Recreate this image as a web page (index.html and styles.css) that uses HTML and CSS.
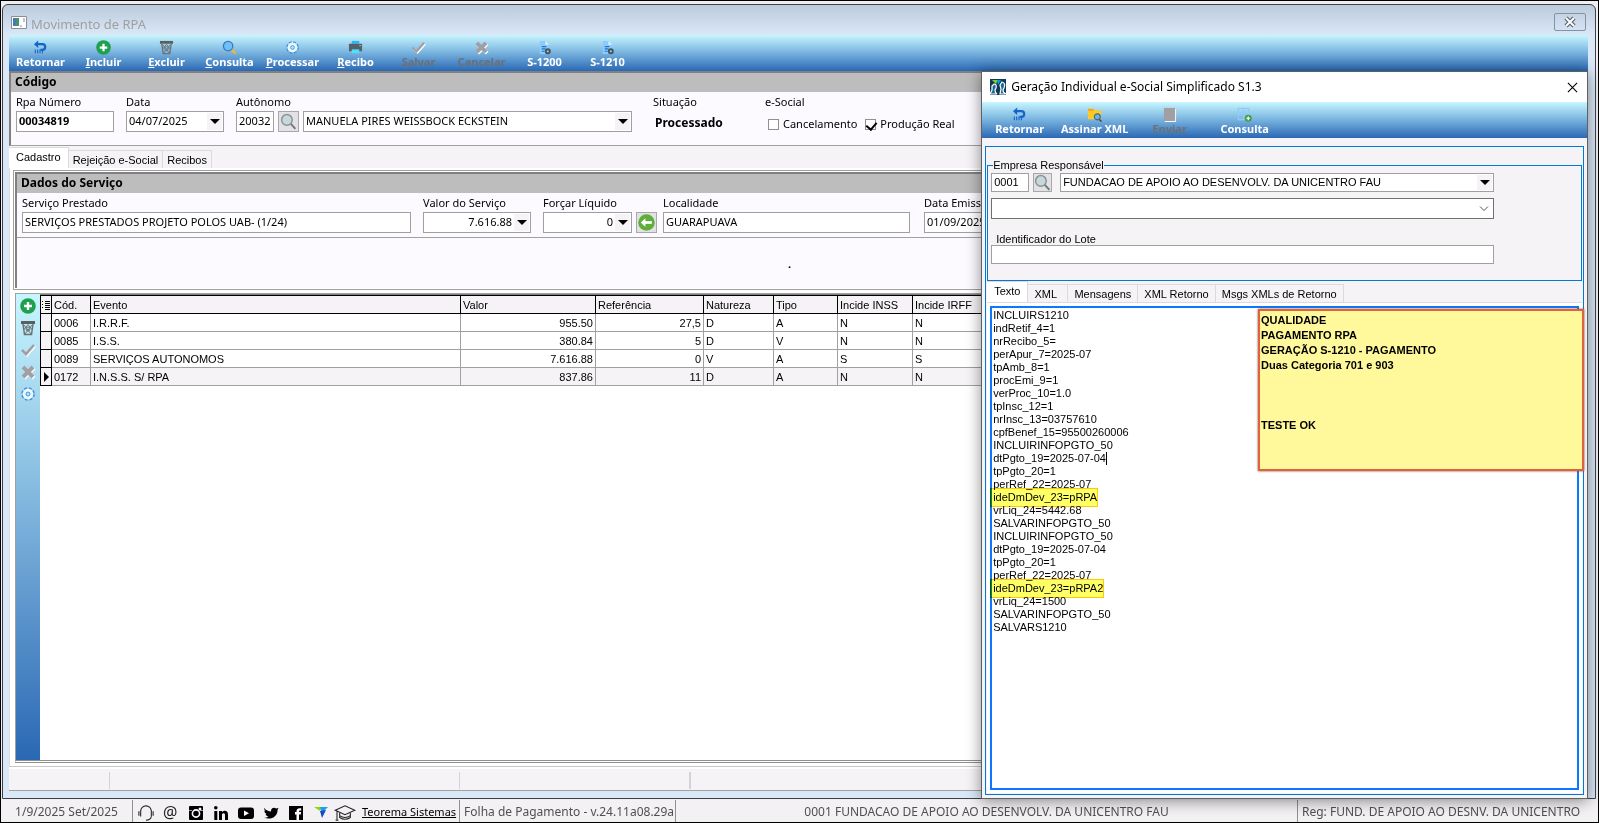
FILE: index.html
```
<!DOCTYPE html>
<html lang="pt-BR">
<head>
  <meta charset="UTF-8">
  <title>Movimento de RPA</title>
  <link rel="stylesheet" href="styles.css">
</head>
<body>

  <svg class="defs" aria-hidden="true">
    <symbol id="i-back" viewBox="0 0 16 16">
      <path d="M4 4.500H10a3 3 0 0 1 0 6H8" fill="none" stroke="#1565c8" stroke-width="2.400"/>
      <path d="M1 4.500L5.500 0.500V8.500Z" fill="#1565c8"/>
      <path d="M2.500 10v4M5 10v4M7.500 10v4M10 11v3" stroke="#1565c8" stroke-width="1.200"/>
    </symbol>
    <symbol id="i-add" viewBox="0 0 16 16">
      <circle cx="8" cy="8" r="7.800" fill="#1fa04c"/>
      <path d="M8 4v8M4 8h8" stroke="#fff" stroke-width="2.400"/>
    </symbol>
    <symbol id="i-trash" viewBox="0 0 16 16">
      <path d="M1 1h14v3H1z" fill="#5a6060"/>
      <path d="M3 4L4.500 14.500H11.500L13 4" fill="none" stroke="#6c7474" stroke-width="1.500"/>
      <path d="M4 5l7 9M8 4.500l4 5M12 5l-7 9M8 4.500l-4 5" stroke="#6c7474" stroke-width="1"/>
      <circle cx="8" cy="9" r="2" fill="none" stroke="#6c7474"/>
    </symbol>
    <symbol id="i-lens" viewBox="0 0 16 16">
      <path d="M10 10L14.500 14.500" stroke="#f2b633" stroke-width="2.400"/>
      <circle cx="6.500" cy="6.500" r="5" fill="#6fc0fa" stroke="#3d79b8" stroke-width="1.400"/>
    </symbol>
    <symbol id="i-lens-gray" viewBox="0 0 16 16">
      <path d="M10 10L14.500 15" stroke="#707878" stroke-width="1.800"/>
      <circle cx="6.500" cy="6.500" r="5" fill="#c6d8dc" stroke="#8a9494" stroke-width="1.400"/>
    </symbol>
    <symbol id="i-gear" viewBox="0 0 16 16">
      <circle cx="8" cy="8" r="5" fill="none" stroke="#3d92dc" stroke-width="3.600" stroke-dasharray="2.500 1.430"/>
      <circle cx="8" cy="8" r="4.200" fill="#fff" stroke="#e8f6ff" stroke-width="2.400"/>
      <circle cx="8" cy="8" r="2" fill="#b4e4fa" stroke="#3d92dc" stroke-width="1"/>
    </symbol>
    <symbol id="i-print" viewBox="0 0 16 16">
      <path d="M4 1h8v3H4z" fill="#29b6f6"/>
      <path d="M1 4h14v8H1z" fill="#56606a"/>
      <path d="M4 10h8v4H4z" fill="#4fe0fa"/>
      <path d="M12 6h2" stroke="#6ce08a"/>
    </symbol>
    <symbol id="i-check" viewBox="0 0 16 16">
      <path d="M3 9l4 4 8-9" fill="none" stroke="#fff" stroke-width="2.600"/>
      <path d="M2 8l4 4 8-9" fill="none" stroke="#a0a0a4" stroke-width="2.600"/>
    </symbol>
    <symbol id="i-cross" viewBox="0 0 16 16">
      <path d="M4 4l10 10M14 4L4 14" stroke="#fff" stroke-width="4"/>
      <path d="M3 3l10 10M13 3L3 13" stroke="#a0a0a4" stroke-width="4"/>
    </symbol>
    <symbol id="i-doc" viewBox="0 0 16 16">
      <path d="M3 1h6l4 4v10H3z" fill="#90caf9"/>
      <path d="M9 1l4 4H9z" fill="#e1f5fe"/>
      <path d="M5 7h5M5 9.500h4M5 12h3" stroke="#1976d2" stroke-width="1.300"/>
      <circle cx="11.500" cy="12" r="2.200" fill="none" stroke="#42535c" stroke-width="2"/>
    </symbol>
    <symbol id="i-folder" viewBox="0 0 16 16">
      <path d="M1 2h6l1.500 1.500H15V13H1z" fill="#ffca28"/>
      <path d="M1 2h6v2H1z" fill="#ffa000"/>
      <path d="M13 13l2.500 2.500" stroke="#37474f" stroke-width="1.600"/>
      <circle cx="11" cy="10.500" r="3.200" fill="#64b5f6" stroke="#54646c" stroke-width="1.200"/>
    </symbol>
    <symbol id="i-box" viewBox="0 0 16 16">
      <path d="M3 2h12v14H3z" fill="#fff"/>
      <path d="M2 1h12v14H2z" fill="#a0a0a4"/>
    </symbol>
    <symbol id="i-grid" viewBox="0 0 16 16">
      <path d="M1.500 1.500h11v12h-11zM7 1.500v12M1.500 7h11" fill="none" stroke="#8fcbfa" stroke-width="1.400"/>
      <circle cx="12" cy="12" r="3.800" fill="#43a047"/>
      <path d="M12 10v4M10 12h4" stroke="#fff" stroke-width="1.300"/>
    </symbol>
  </svg>

  <main class="window">
    <header class="titlebar">
      <svg class="app-icon" viewBox="0 0 16 13"><path d="M.5.5h15v12H.5z" fill="#fff" stroke="#8a8f96"/><path d="M2 2h6v8H2z" fill="#4a9070"/><path d="M2 2h3v8H2z" fill="#477da8"/><path d="M13 2v4M9 10h2" stroke="#889"/></svg>
      <h1>Movimento de RPA</h1>
      <button class="close" aria-label="Fechar">
        <svg viewBox="0 0 14 12"><path d="M3 2l8 8M11 2l-8 8" stroke="#5c6370" stroke-width="4.400"/><path d="M3 2l8 8M11 2l-8 8" stroke="#fff" stroke-width="2"/></svg>
      </button>
    </header>

    <nav class="toolbar">
      <button><svg><use href="#i-back"/></svg><span>Retornar</span></button>
      <button><svg><use href="#i-add"/></svg><span><u>I</u>ncluir</span></button>
      <button><svg><use href="#i-trash"/></svg><span><u>E</u>xcluir</span></button>
      <button><svg><use href="#i-lens"/></svg><span><u>C</u>onsulta</span></button>
      <button><svg><use href="#i-gear"/></svg><span><u>P</u>rocessar</span></button>
      <button><svg><use href="#i-print"/></svg><span><u>R</u>ecibo</span></button>
      <button disabled><svg><use href="#i-check"/></svg><span><u>S</u>alvar</span></button>
      <button disabled><svg><use href="#i-cross"/></svg><span>Cancelar</span></button>
      <button><svg><use href="#i-doc"/></svg><span>S-1200</span></button>
      <button><svg><use href="#i-doc"/></svg><span>S-1210</span></button>
    </nav>

    <section class="panel code-panel">
      <h2>Código</h2>
      <div class="fields">
        <div class="field w-code">
          <label for="rpa">Rpa Número</label>
          <input id="rpa" class="box strong" value="00034819">
        </div>
        <div class="field w-code">
          <label for="data">Data</label>
          <div class="box combo"><input id="data" value="04/07/2025"><button aria-label="Abrir calendário"></button></div>
        </div>
        <div class="field">
          <label for="aut">Autônomo</label>
          <div class="group">
            <input id="aut" class="box w-aut" value="20032">
            <button class="find" aria-label="Pesquisar autônomo"><svg><use href="#i-lens-gray"/></svg></button>
            <div class="box combo w-name"><select aria-label="Nome do autônomo"><option>MANUELA PIRES WEISSBOCK ECKSTEIN</option></select><i></i></div>
          </div>
        </div>
        <div class="field w-status">
          <span>Situação</span>
          <strong>Processado</strong>
        </div>
        <div class="field">
          <span>e-Social</span>
          <div class="checks">
            <label><input type="checkbox">Cancelamento</label>
            <label><input type="checkbox" checked>Produção Real</label>
          </div>
        </div>
      </div>
    </section>

    <div class="tabs main-tabs">
      <button class="active">Cadastro</button>
      <button>Rejeição e-Social</button>
      <button>Recibos</button>
    </div>

    <div class="page">
      <div class="frame">
        <section class="panel">
          <h2>Dados do Serviço</h2>
          <div class="fields service">
            <div class="field w-service">
              <label for="serv">Serviço Prestado</label>
              <input id="serv" class="box" value="SERVIÇOS PRESTADOS PROJETO POLOS UAB- (1/24)">
            </div>
            <div class="field w-value">
              <label for="valor">Valor do Serviço</label>
              <div class="box combo num"><input id="valor" value="7.616.88"><button aria-label="Calculadora"></button></div>
            </div>
            <div class="field">
              <label for="liq">Forçar Líquido</label>
              <div class="group">
                <div class="box combo num w-liq"><input id="liq" value="0"><button aria-label="Calculadora"></button></div>
                <button class="find" aria-label="Aplicar líquido"><svg viewBox="0 0 16 16"><circle cx="8" cy="8" r="7.800" fill="#5fae3c"/><path d="M5 8h8" stroke="#fff" stroke-width="2.600"/><path d="M2.500 8L7 4v8z" fill="#fff"/></svg></button>
              </div>
            </div>
            <div class="field w-local">
              <label for="loc">Localidade</label>
              <input id="loc" class="box" value="GUARAPUAVA">
            </div>
            <div class="field w-code">
              <label for="emis">Data Emissão</label>
              <input id="emis" class="box" value="01/09/2025">
            </div>
          </div>
          <div class="blank"><b>·</b></div>
        </section>
      </div>

      <div class="grid">
        <div class="sidebar">
          <button aria-label="Incluir evento"><svg><use href="#i-add"/></svg></button>
          <button aria-label="Excluir evento"><svg><use href="#i-trash"/></svg></button>
          <button aria-label="Salvar evento" disabled><svg><use href="#i-check"/></svg></button>
          <button aria-label="Cancelar evento" disabled><svg><use href="#i-cross"/></svg></button>
          <button aria-label="Processar evento"><svg><use href="#i-gear"/></svg></button>
        </div>
        <div class="grid-body">
          <table>
            <colgroup>
              <col class="c-mark"><col class="c-cod"><col class="c-evento"><col class="c-valor"><col class="c-ref"><col class="c-nat"><col class="c-tipo"><col class="c-inss"><col class="c-irff"><col>
            </colgroup>
            <thead>
              <tr><th><svg class="mark" viewBox="0 0 8 10"><path d="M0 1.500h1M0 4.500h1M0 7.500h1M3 1.500h5M3 3.500h5M3 5.500h5M3 7.500h5M3 9.500h5" stroke="#000"/></svg></th><th>Cód.</th><th>Evento</th><th>Valor</th><th>Referência</th><th>Natureza</th><th>Tipo</th><th>Incide INSS</th><th>Incide IRFF</th><th></th></tr>
            </thead>
            <tbody>
              <tr><th></th><td>0006</td><td>I.R.R.F.</td><td class="r">955.50</td><td class="r">27,5</td><td>D</td><td>A</td><td>N</td><td>N</td><td></td></tr>
              <tr><th></th><td>0085</td><td>I.S.S.</td><td class="r">380.84</td><td class="r">5</td><td>D</td><td>V</td><td>N</td><td>N</td><td></td></tr>
              <tr><th></th><td>0089</td><td>SERVIÇOS AUTONOMOS</td><td class="r">7.616.88</td><td class="r">0</td><td>V</td><td>A</td><td>S</td><td>S</td><td></td></tr>
              <tr class="current"><th><svg class="mark" viewBox="0 0 8 10"><path d="M2 0l5 5-5 5z"/></svg></th><td>0172</td><td>I.N.S.S. S/ RPA</td><td class="r">837.86</td><td class="r">11</td><td>D</td><td>A</td><td>N</td><td>N</td><td></td></tr>
            </tbody>
          </table>
        </div>
      </div>
    </div>

    <div class="status">
      <span class="s1"></span><span class="s2"></span><span class="s3"></span><span></span>
    </div>
  </main>

  <footer class="taskbar">
    <span class="t-date">1/9/2025 Set/2025</span>
    <span class="t-links">
      <a href="#" aria-label="Suporte"><svg viewBox="0 0 18 18"><path d="M3 9V7a6 6 0 0 1 12 0v2M3 6v7M15 6v7M1 7v5M17 7v5M15 13q-1 4-6 4" fill="none" stroke="#222" stroke-width="1.200"/></svg></a>
      <a href="#" class="at">@</a>
      <a href="#" aria-label="Instagram"><svg viewBox="0 0 16 16"><rect x="1" y="1" width="14" height="14" rx="1"/><circle cx="8" cy="8.500" r="3.600" fill="none" stroke="#fff" stroke-width="1.600"/><path d="M11 3h2v2h-2zM1 5.500h3M12 5.500h3" fill="#fff" stroke="#fff" stroke-width=".6"/></svg></a>
      <a href="#" aria-label="LinkedIn"><svg viewBox="0 0 16 16"><circle cx="2.800" cy="2.800" r="1.800"/><path d="M1.300 6h3v9h-3zM6 6h3v1.300C10.500 5 15 5.200 15 9.500V15h-3v-5c0-2.600-3-2.200-3 0v5H6z"/></svg></a>
      <a href="#" aria-label="YouTube"><svg viewBox="0 0 16 16"><rect x="0" y="2.500" width="16" height="11.500" rx="3"/><path d="M6 5.500l5 2.700-5 2.700z" fill="#fff"/></svg></a>
      <a href="#" aria-label="Twitter"><svg viewBox="0 0 16 16"><path d="M1 3c2 2.400 4.500 3.300 7 3.400C7.600 3.500 11 1.400 13 3.600L15.500 3l-1 2c.5 6-6 10.500-13.500 7.800 2 0 3.400-.5 4.500-1.300C4 11.300 3 10.300 2.600 9h1.300C2.300 8.300 1.300 7 1.400 5.400l1.200.4C1.200 4.600.9 4 1 3z"/></svg></a>
      <a href="#" aria-label="Facebook"><svg viewBox="0 0 16 16"><rect x="1" y="1" width="14" height="14"/><path d="M8.500 15V9.500H7V7h1.500C8.300 4 9.500 2.800 13.200 3.200v2.300c-2-.2-2.200.2-2.100 1.500h2l-.3 2.500H11V15z" fill="#fff"/></svg></a>
      <a href="#" aria-label="Teorema"><svg viewBox="0 0 16 16"><path d="M1 2h8L7 6z" fill="#8bd80c"/><path d="M7 2h8L9 8z" fill="#12a2f0"/><path d="M7 6l6-1-4 8z" fill="#1648c8"/></svg></a>
      <a href="#" aria-label="Treinamento" class="cap"><svg viewBox="0 0 24 18"><path d="M1 6L12 1l11 5-11 5zM6 9v5q6 4 12 0V9M6 12q6 4 12 0M3 7v9M1.500 17h3" fill="none" stroke="#222" stroke-width="1.200"/></svg></a>
    </span>
    <a class="t-site" href="#">Teorema Sistemas</a>
    <span class="t-app">Folha de Pagamento - v.24.11a08.29a</span>
    <span class="t-company">0001 FUNDACAO DE APOIO AO DESENVOLV. DA UNICENTRO FAU</span>
    <span class="t-reg">Reg: FUND. DE APOIO AO DESNV. DA UNICENTRO</span>
  </footer>

  <div class="dialog" role="dialog" aria-labelledby="dlgTitle">
    <header class="dialog-title">
      <svg class="dlg-icon" viewBox="0 0 16 16"><path d="M0 0h16v16H0z" fill="#103a54"/><path d="M2 1h6l-2 4z" fill="#7ed321"/><path d="M7 1h4L8 6z" fill="#00a0e8"/><path d="M4 5q3 0 2 4l-1 2q0 3 2 4H0l2-4V7zM12 3q4 1 2 6l-1 2q0 3 3 4h-6l1-5-1-4z" fill="#1f6a9a" stroke="#fff" stroke-width="1.200"/></svg>
      <h2 id="dlgTitle">Geração Individual e-Social Simplificado S1.3</h2>
      <button aria-label="Fechar"><svg viewBox="0 0 12 12"><path d="M1 1l10 10M11 1L1 11" stroke="#000" stroke-width="1.200"/></svg></button>
    </header>
    <nav class="toolbar wide">
      <button><svg><use href="#i-back"/></svg><span>Retornar</span></button>
      <button><svg><use href="#i-folder"/></svg><span>Assinar XML</span></button>
      <button disabled><svg><use href="#i-box"/></svg><span>Enviar</span></button>
      <button><svg><use href="#i-grid"/></svg><span>Consulta</span></button>
    </nav>

    <div class="dialog-body">
      <fieldset>
        <legend>Empresa Responsável</legend>
        <div class="group company">
          <input class="box w-emp" aria-label="Código da empresa" value="0001">
          <button class="find" aria-label="Pesquisar empresa"><svg><use href="#i-lens-gray"/></svg></button>
          <div class="box combo grow"><select aria-label="Empresa"><option>FUNDACAO DE APOIO AO DESENVOLV. DA UNICENTRO FAU</option></select><i></i></div>
        </div>
        <div class="box combo cert"><select aria-label="Certificado"><option></option></select><svg viewBox="0 0 10 6"><path d="M1 1l4 4 4-4" fill="none" stroke="#555"/></svg></div>
        <label for="lote">Identificador do Lote</label>
        <input id="lote" class="box lote">
      </fieldset>

      <div class="tabs">
        <button class="active">Texto</button>
        <button class="t-xml">XML</button>
        <button>Mensagens</button>
        <button>XML Retorno</button>
        <button>Msgs XMLs de Retorno</button>
      </div>
      <div class="text-page">
        <textarea aria-label="Texto" spellcheck="false">INCLUIRS1210
indRetif_4=1
nrRecibo_5=
perApur_7=2025-07
tpAmb_8=1
procEmi_9=1
verProc_10=1.0
tpInsc_12=1
nrInsc_13=03757610
cpfBenef_15=95500260006
INCLUIRINFOPGTO_50
dtPgto_19=2025-07-04
tpPgto_20=1
perRef_22=2025-07
ideDmDev_23=pRPA
vrLiq_24=5442.68
SALVARINFOPGTO_50
INCLUIRINFOPGTO_50
dtPgto_19=2025-07-04
tpPgto_20=1
perRef_22=2025-07
ideDmDev_23=pRPA2
vrLiq_24=1500
SALVARINFOPGTO_50
SALVARS1210</textarea>
        <span class="caret"></span>
        <span class="marker first"></span>
        <span class="marker second"></span>
        <aside class="note">
          <p>QUALIDADE<br>PAGAMENTO RPA<br>GERAÇÃO S-1210 - PAGAMENTO<br>Duas Categoria 701 e 903</p>
          <p>TESTE OK</p>
        </aside>
      </div>
    </div>
  </div>

</body>
</html>
```
FILE: styles.css
```
* {
  box-sizing: border-box;
}
body {
  margin: 0;
  height: 100vh;
  display: flex;
  flex-direction: column;
  position: relative;
  overflow: hidden;
  border: 1px solid #000;
  background: #f0eef0;
  font-family: "Noto Sans", "Open Sans", sans-serif;
  font-size: 11px;
  line-height: 16px;
  color: #000;
}
h1, h2, p {
  margin: 0;
}
h1 {
  font-weight: normal;
}
button, input, select, textarea {
  font: inherit;
  color: inherit;
  margin: 0;
}
button {
  padding: 0;
  border: 0;
  background: none;
}
.defs {
  display: none;
}

/* main window */
.window {
  flex: 1;
  min-height: 0;
  display: flex;
  flex-direction: column;
  margin: 3px 2px 0 1px;
  padding: 0 7px 7px 6px;
  border: 1px solid #404048;
  border-radius: 6px 6px 0 0;
  background: linear-gradient(#bccbdc, #d9e7f7 30px);
}
.titlebar {
  flex: none;
  height: 30px;
  display: flex;
  align-items: center;
  gap: 4px;
  padding: 4px 2px 0;
}
.titlebar h1 {
  flex: 1;
  font-size: 13px;
  padding-top: 3px;
  color: #a0a0a0;
}
.app-icon {
  width: 16px;
  height: 13px;
}
.close {
  width: 32px;
  height: 18px;
  border: 1px solid #8591a8;
  border-radius: 2px;
}
.close svg {
  width: 14px;
  height: 12px;
  display: block;
  margin: auto;
}

/* toolbars */
.toolbar {
  flex: none;
  height: 36px;
  display: flex;
  background: linear-gradient(#c8f6ff, #7fb9e2 45%, #2a68b4);
}
.toolbar button {
  width: 63px;
  display: flex;
  flex-direction: column;
  align-items: center;
  padding-top: 5px;
  color: #fff;
  font-weight: bold;
  line-height: 14px;
  white-space: nowrap;
}
.toolbar.wide button {
  width: 75px;
}
.toolbar button:disabled {
  color: #6c7076;
}
.toolbar svg {
  width: 15px;
  height: 15px;
}

/* panels and fields */
.panel {
  background: #fdfaff;
  border-top: 2px solid #808080;
  border-left: 2px solid #808080;
}
.panel h2 {
  height: 19px;
  padding-left: 4px;
  background: #bdbdbd;
  font-size: 12px;
  line-height: 18px;
}
.code-panel {
  flex: none;
  height: 75px;
  border-bottom: 1px solid #a0a0a0;
}
.fields {
  display: flex;
  gap: 12px;
  padding: 2px 6px 0 5px;
}
.field {
  flex: none;
  display: flex;
  flex-direction: column;
  gap: 1px;
}
.box {
  width: 100%;
  height: 21px;
  padding: 0 2px 2px;
  border: 1px solid #a0a0a0;
  border-radius: 0;
  background: #fff;
}
.strong {
  font-weight: bold;
}
.group {
  display: flex;
  gap: 4px;
}
.combo {
  display: flex;
  padding: 0 1px 0 0;
}
.combo input, .combo select {
  flex: 1;
  width: 20px;
  padding: 0 2px 2px;
  border: 0;
  outline: 0;
  background: none;
  appearance: none;
}
.combo button, .combo i {
  width: 15px;
  display: flex;
  align-items: center;
  justify-content: center;
  margin: 1px 0;
  background: #f6f3f7;
}
.combo button::after, .combo i::after {
  content: "";
  border: 5px solid transparent;
  border-top-color: #000;
  border-bottom: 0;
}
.num input {
  text-align: right;
}
.find {
  width: 21px;
  height: 21px;
  border: 1px solid #a8a8a8;
  background: #e2e2e4;
}
.find svg {
  width: 17px;
  height: 17px;
  display: block;
  margin: auto;
}
.w-code {
  width: 98px;
}
.w-aut {
  width: 38px;
}
.w-name {
  width: 329px;
}
.w-status {
  width: 100px;
  margin-left: 9px;
}
.w-status strong {
  font-size: 12px;
  padding: 4px 2px;
}
.w-service {
  width: 389px;
}
.w-value {
  width: 108px;
}
.w-liq {
  width: 89px;
}
.w-local {
  width: 247px;
  margin: 0 2px 0 -6px;
}
.checks {
  display: flex;
  gap: 8px;
  padding: 5px 3px;
}
.checks label {
  display: flex;
  align-items: center;
  gap: 4px;
}
.checks input {
  appearance: none;
  width: 11px;
  height: 11px;
  border: 1px solid #909090;
  background: #fff;
}
.checks input:checked::after {
  content: "";
  display: block;
  width: 5px;
  height: 8px;
  margin: 0 2px;
  border: solid #000;
  border-width: 0 2px 2px 0;
  transform: rotate(40deg);
}

/* tabs */
.tabs {
  flex: none;
  height: 21px;
  display: flex;
  align-items: flex-end;
  font-family: "Liberation Sans", Arial, sans-serif;
}
.tabs button {
  height: 18px;
  padding: 0 6px;
  border: 1px solid #dcdadd;
  border-left: 0;
  border-bottom: 0;
  background: #f6f3f7;
}
.tabs .active {
  height: 21px;
  padding: 0 7px 2px;
  background: #fff;
}
.main-tabs {
  height: 22px;
  background: #f6f3f7;
}
.main-tabs button {
  padding: 0 4px;
}

/* page with service data and events */
.page {
  flex: 1;
  min-height: 0;
  display: flex;
  flex-direction: column;
  gap: 3px;
  padding: 2px 4px 3px 3px;
  background: #fff;
  border-left: 1px solid #dcdadd;
  border-bottom: 1px solid #c8c8c8;
}
.frame {
  flex: none;
  padding: 1px;
  border: 1px solid #a0a0a0;
}
.service {
  gap: 12px;
  height: 45px;
  border-bottom: 1px solid #a0a0a0;
}
.blank {
  height: 50px;
  padding-right: 20px;
  text-align: center;
  line-height: 58px;
}
.grid {
  flex: 1;
  min-height: 0;
  display: flex;
  margin-left: 2px;
  border: 1px solid #a0a0a0;
  border-bottom: 3px double #909090;
}
.sidebar {
  width: 24px;
  display: flex;
  flex-direction: column;
  align-items: center;
  gap: 6px;
  padding: 4px 1px 0 0;
  background: linear-gradient(#c8f6ff, #2a68b4);
}
.sidebar button {
  height: 16px;
}
.sidebar svg {
  width: 16px;
  height: 16px;
  display: block;
}
.grid-body {
  flex: 1;
  border-top: 1px solid #808080;
  font-family: "Liberation Sans", Arial, sans-serif;
}
table {
  width: 100%;
  table-layout: fixed;
  border-collapse: collapse;
}
th, td {
  height: 18px;
  padding: 0 2px;
  border: 1px solid #a0a0a0;
  font-weight: normal;
  line-height: 16px;
  text-align: left;
  white-space: nowrap;
}
th {
  border-color: #000;
  background: #f6f3f7;
}
tbody th, th:first-child {
  padding: 0 1px;
}
.current td {
  background: #f6f3f7;
}
.r {
  text-align: right;
}
.mark {
  width: 8px;
  height: 10px;
  display: block;
}
.c-mark { width: 11px; }
.c-cod { width: 39px; }
.c-evento { width: 370px; }
.c-valor { width: 135px; }
.c-ref { width: 108px; }
.c-nat { width: 70px; }
.c-tipo { width: 64px; }
.c-inss { width: 75px; }
.c-irff { width: 75px; }

.status {
  flex: none;
  height: 24px;
  display: flex;
  padding: 3px 0 1px;
  border-top: 2px solid #fff;
  border-bottom: 1px solid #a0a0a0;
  background: #f6f3f7;
}
.status span {
  border-right: 1px solid #d4d2d6;
}
.s1 { width: 101px; }
.s2 { width: 350px; }
.s3 { width: 230px; }

/* bottom bar */
.taskbar {
  flex: none;
  height: 22px;
  display: flex;
  align-items: center;
  margin-top: 1px;
  background: #f4f1f5;
  font-size: 12px;
  line-height: 24px;
  color: #505050;
  white-space: nowrap;
}
.taskbar > * {
  height: 22px;
}
.t-date {
  width: 132px;
  text-align: center;
  border-right: 1px solid #909090;
}
.t-links {
  display: flex;
  align-items: center;
  gap: 9px;
  padding: 4px 0 0 5px;
}
.t-links a {
  width: 16px;
  height: 16px;
  color: #222;
  text-decoration: none;
}
.t-links svg {
  width: 16px;
  height: 16px;
  display: block;
}
.t-links .at {
  font-size: 16px;
  line-height: 14px;
}
.t-links .cap, .cap svg {
  width: 24px;
}
.t-links .cap {
  margin-left: -5px;
}
.t-site {
  padding: 0 3px 0 5px;
  font-size: 11px;
  color: #000;
  border-right: 1px solid #909090;
}
.t-app {
  width: 216px;
  padding-left: 4px;
  border-right: 1px solid #909090;
}
.t-company {
  flex: 1;
  text-align: center;
  border-right: 1px solid #909090;
}
.t-reg {
  width: 300px;
  padding-left: 4px;
}

/* e-Social dialog, floats over the main window */
.dialog {
  position: absolute;
  top: 70px;
  right: 10px;
  bottom: 23px;
  width: 38%;
  display: flex;
  flex-direction: column;
  border: 1px solid #606060;
  background: #f6f3f7;
  box-shadow: 0 2px 14px rgba(0, 0, 0, 0.45);
}
.dialog-title {
  flex: none;
  height: 30px;
  display: flex;
  align-items: center;
  gap: 5px;
  padding: 0 9px 0 8px;
  background: #fff;
}
.dialog-title h2 {
  flex: 1;
  font-size: 12px;
  font-weight: normal;
}
.dlg-icon {
  width: 16px;
  height: 16px;
}
.dialog-title button svg {
  width: 11px;
  height: 11px;
  display: block;
}
.dialog-body {
  flex: 1;
  min-height: 0;
  display: flex;
  flex-direction: column;
  margin: 8px 3px 3px;
  padding: 12px 1px 1px;
  border: 1px solid #0078d7;
  font-family: "Liberation Sans", Arial, sans-serif;
}
fieldset {
  flex: none;
  margin: 0;
  height: 122px;
  padding: 2px 87px 0 3px;
  border: 1px solid #0078d7;
}
legend {
  height: 12px;
  margin-left: 2px;
  padding: 0;
  line-height: 12px;
}
.company .box, .lote, .company .find {
  height: 19px;
}
.company .find {
  width: 19px;
}
.w-emp {
  width: 38px;
}
.grow {
  flex: 1;
  margin-left: 4px;
}
.cert {
  margin: 6px 0 16px;
  border-color: #707070;
}
.cert svg {
  width: 10px;
  margin-right: 3px;
}
fieldset label {
  display: block;
  height: 10px;
  margin-left: 5px;
  line-height: 8px;
}
.lote {
  display: block;
}
.t-xml {
  width: 40px;
  text-align: left;
}
.text-page {
  flex: 1;
  min-height: 0;
  position: relative;
  padding: 3px;
  background: #fff;
  border-top: 1px solid #dcdadd;
}
textarea {
  display: block;
  width: 100%;
  height: 100%;
  padding: 1px;
  border: 2px solid #0a78ff;
  outline: 0;
  resize: none;
  background: #fff;
  line-height: 13px;
}
.caret {
  position: absolute;
  top: 149px;
  left: 119px;
  width: 1px;
  height: 13px;
  background: #000;
}
.marker {
  position: absolute;
  left: 3px;
  width: 108px;
  height: 19px;
  border: 1px solid #ffc800;
  background: #ffff66;
  mix-blend-mode: multiply;
}
.first {
  top: 185px;
}
.second {
  top: 276px;
  width: 114px;
}
.note {
  position: absolute;
  top: 6px;
  right: -2px;
  width: 326px;
  height: 162px;
  padding: 2px 1px;
  border: 2px solid #e0623c;
  background: #fff99b;
  box-shadow: 0 0 2px #804030;
  font-weight: bold;
  line-height: 15px;
}
.note p + p {
  margin-top: 45px;
}
```
